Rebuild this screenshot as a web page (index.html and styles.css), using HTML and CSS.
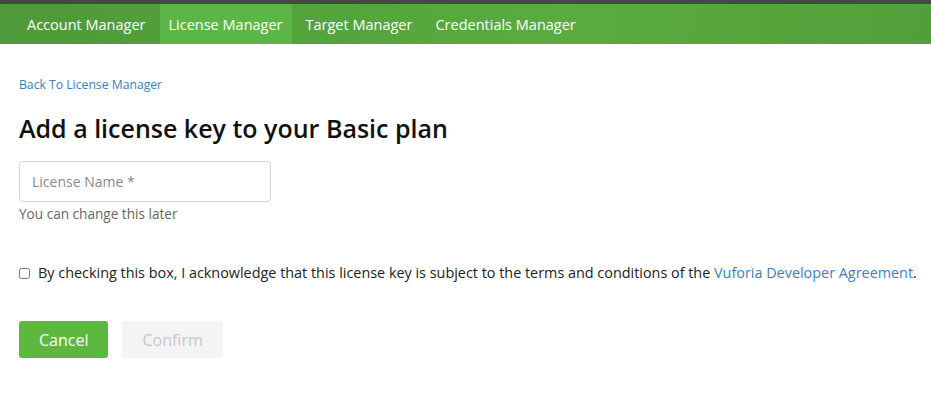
FILE: index.html
```html
<!DOCTYPE html>
<html>
<head>
<meta charset="utf-8">
<link rel="stylesheet" href="styles.css">
</head>
<body>
<div class="topstrip"></div>
<nav class="nav">
  <a class="nav-item">Account Manager</a>
  <a class="nav-item active">License Manager</a>
  <a class="nav-item">Target Manager</a>
  <a class="nav-item">Credentials Manager</a>
</nav>
<main class="content">
  <a class="back">Back To License Manager</a>
  <h1 class="title">Add a license key to your Basic plan</h1>
  <div class="field">
    <input class="input" type="text" placeholder="License Name *">
    <div class="help">You can change this later</div>
  </div>
  <label class="agree">
    <input type="checkbox" class="check">
    <span>By checking this box, I acknowledge that this license key is subject to the terms and conditions of the <a class="link">Vuforia Developer Agreement</a>.</span>
  </label>
  <div class="actions">
    <button class="btn btn-cancel">Cancel</button>
    <button class="btn btn-confirm" disabled>Confirm</button>
  </div>
</main>
</body>
</html>
```
FILE: styles.css
```css
* { box-sizing: border-box; }
html, body { margin: 0; padding: 0; background: #fff; }
body { font-family: "Open Sans", "Noto Sans", sans-serif; color: #222; }
.topstrip { height: 4px; background: #474747; }
.nav {
  height: 40px;
  display: flex;
  align-items: stretch;
  padding-left: 15.5px;
  background: linear-gradient(100deg, #4e9939 0%, #56a73e 45%, #5aac40 60%, #519f3a 100%);
}
.nav-item {
  display: flex;
  align-items: center;
  padding: 0 9px;
  margin: 0 2.5px;
  color: #fff;
  font-size: 14.5px;
  text-decoration: none;
}
.nav-item.active { background: #5cb646; border-radius: 3px 3px 0 0; }
.content { padding: 0 0 0 19px; }
.back {
  display: block;
  margin-top: 32px;
  font-size: 12.2px;
  line-height: 17px;
  color: #3a80c0;
}
.title {
  margin: 19px 0 0;
  font-size: 25px;
  line-height: 32px;
  font-weight: 600;
  color: #111;
}
.field { margin-top: 17px; }
.input {
  display: block;
  width: 252px;
  height: 41px;
  border: 1px solid #d4d4d4;
  border-radius: 4px;
  padding: 0 12px;
  font-family: inherit;
  font-size: 14px;
  color: #333;
}
.input::placeholder { color: #888; }
.help { margin-top: 2px; font-size: 13.6px; line-height: 20px; color: #666; }
.agree {
  display: flex;
  align-items: center;
  margin-top: 39px;
  font-size: 14.4px;
  line-height: 20px;
  color: #222;
  white-space: nowrap;
}
.check { width: 11px; height: 11px; margin: 0 8px 0 0; flex: none; }
.link { color: #3a7fc0; }
.actions { display: flex; gap: 14px; margin-top: 38px; }
.btn {
  height: 37px;
  border: none;
  border-radius: 3px;
  font-family: inherit;
  font-size: 16px;
  padding: 0 20px;
}
.btn-cancel { background: #5cb83f; color: #fff; }
.btn-confirm { background: #f4f4f4; color: #c8c8c8; }
```
